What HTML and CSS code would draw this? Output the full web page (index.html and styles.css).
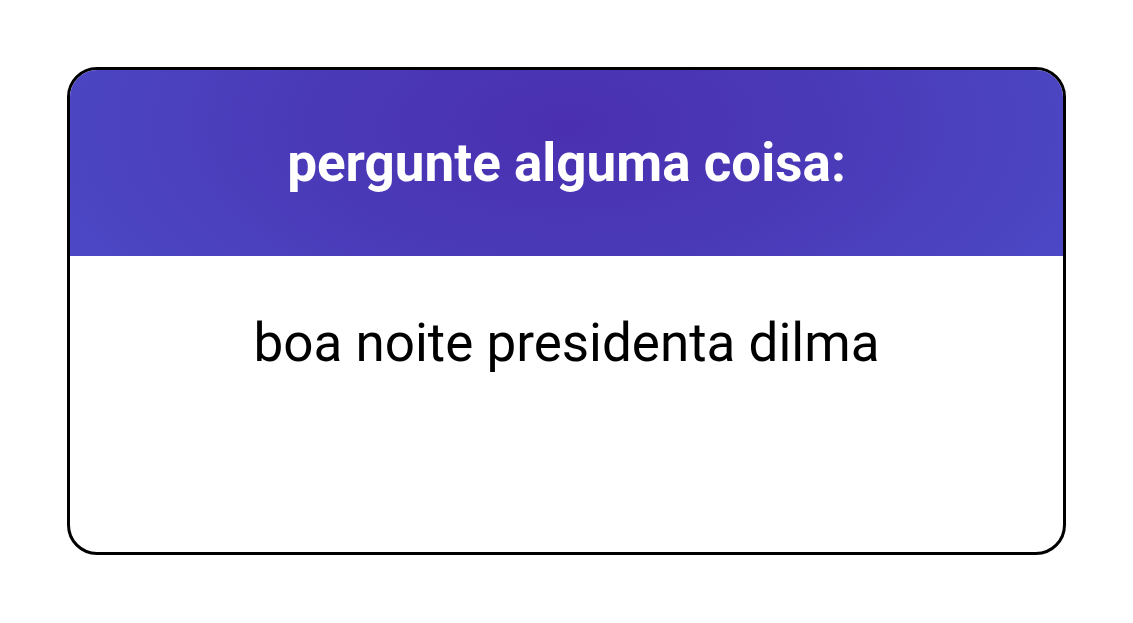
FILE: index.html
```html
<!DOCTYPE html>
<html lang="pt">
<head>
    <meta charset="UTF-8">
    <meta name="viewport" content="width=device-width, initial-scale=1.0">
    <title>Pergunta</title>
    <link rel="stylesheet" href="styles.css">
</head>
<body>
    <div class="card">
        <div class="card-header">
            <h1>pergunte alguma coisa:</h1>
        </div>
        <div class="card-body">
            <p class="question">boa noite presidenta dilma</p>
        </div>
    </div>
</body>
</html>
```

FILE: styles.css
```css
body {
    margin: 0;
    padding: 67px 67px 0;
    font-family: Roboto, "Liberation Sans", sans-serif;
    background: #fff;
}

.card {
    height: 488px;
    border: 3px solid #000;
    border-radius: 30px;
    overflow: hidden;
    box-sizing: border-box;
    display: flex;
    flex-direction: column;
}

.card-header {
    height: 186px;
    display: flex;
    align-items: center;
    justify-content: center;
    background: radial-gradient(ellipse 60% 160% at 50% 30%, #4a30b0 0%, #4a3ab8 45%, #4c4ac7 100%);
}

.card-header h1 {
    margin: 0;
    color: #fff;
    font-size: 53px;
    font-weight: 700;
}

.card-body {
    flex: 1;
    padding-top: 56px;
    text-align: center;
}

.question {
    margin: 0;
    font-size: 53px;
    color: #000;
}
```
